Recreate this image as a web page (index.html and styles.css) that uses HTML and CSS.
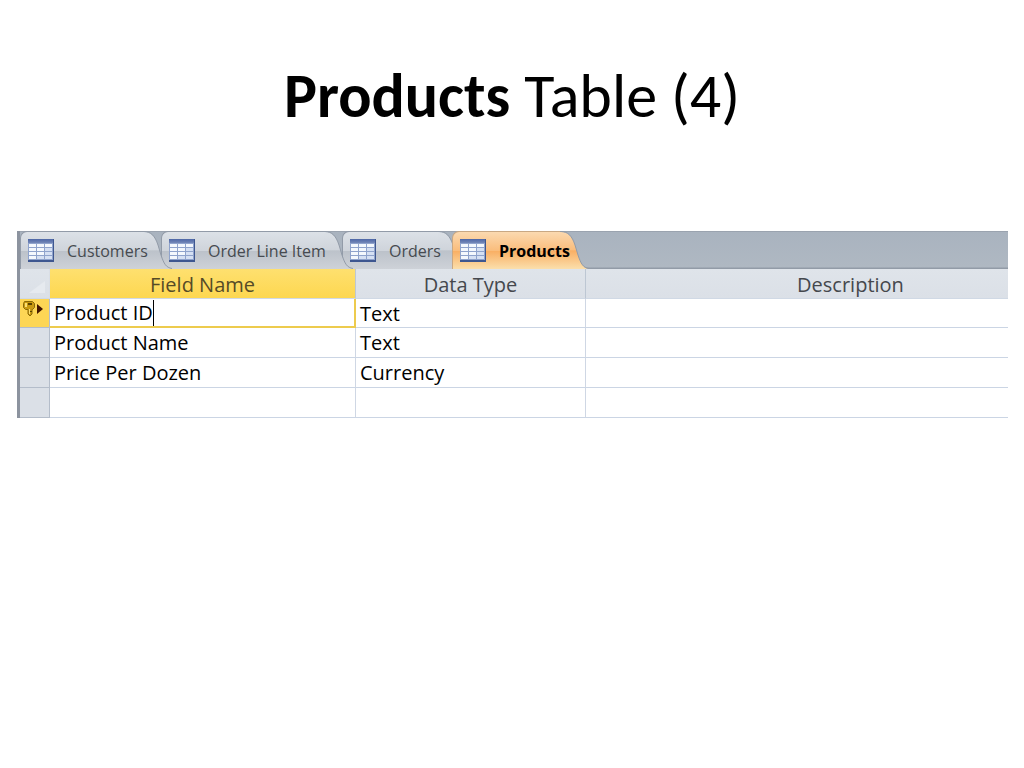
FILE: index.html
```html
<!DOCTYPE html>
<html lang="en">
<head>
<meta charset="utf-8">
<title>Products Table (4)</title>
<link rel="stylesheet" href="styles.css">
</head>
<body>
<svg class="defs" aria-hidden="true">
  <defs>
    <linearGradient id="grey" gradientUnits="userSpaceOnUse" x1="0" y1="0" x2="0" y2="38"><stop offset="0" stop-color="#dce1e7"/><stop offset=".5" stop-color="#cfd4db"/><stop offset=".52" stop-color="#bcc2ca"/><stop offset="1" stop-color="#ced2d8"/></linearGradient>
    <linearGradient id="orange" gradientUnits="userSpaceOnUse" x1="0" y1="0" x2="0" y2="38"><stop offset="0" stop-color="#fbd9b0"/><stop offset=".5" stop-color="#fabd7c"/><stop offset=".52" stop-color="#f9af64"/><stop offset="1" stop-color="#fbdfac"/></linearGradient>
    <linearGradient id="iconhead" x2="0" y2="1"><stop offset="0" stop-color="#4c66a6"/><stop offset="1" stop-color="#7488b8"/></linearGradient>
    <symbol id="grid" viewBox="0 0 26 23">
      <rect width="26" height="23" fill="#8fa3cc"/>
      <rect width="26" height="4" fill="url(#iconhead)"/>
      <path fill="#f4f8fd" d="M1 5h7v3H1zM9 5h7v3H9zM17 5h7v3h-7zM1 9h7v3H1zM9 9h7v3H9zM1 13h7v3H1zM9 13h7v3H9zM1 17h7v3H1z"/>
      <path fill="#d5e0f3" d="M17 9h7v3h-7zM17 13h7v3h-7zM9 17h7v3H9zM17 17h7v3h-7z"/>
      <path fill="#3e5790" d="M0 21h26v2H0zM25 0h1v23h-1z"/>
    </symbol>
    <symbol id="slope" viewBox="0 0 30 38">
      <path d="M0 1H1C8 1 12 5 15 14L18 24C21 33 23 37 29 38H0Z"/>
      <path fill="none" stroke="#929ba8" d="M0 .5H1C8 .5 12 5 15 14L18 24C21 33 23 36.500 29 37.500"/>
    </symbol>
  </defs>
</svg>
<header><h1><strong>Products</strong> Table (4)</h1></header>
<main class="window">
  <nav class="tabs" role="tablist">
    <button class="tab customers" role="tab"><svg class="icon"><use href="#grid"/></svg><span>Customers</span><svg class="edge"><use href="#slope"/></svg></button>
    <button class="tab items" role="tab"><svg class="icon"><use href="#grid"/></svg><span>Order Line Item</span><svg class="edge"><use href="#slope"/></svg></button>
    <button class="tab orders" role="tab"><svg class="icon"><use href="#grid"/></svg><span>Orders</span><svg class="edge"><use href="#slope"/></svg></button>
    <button class="tab active" role="tab" aria-selected="true"><svg class="icon"><use href="#grid"/></svg><span>Products</span><svg class="edge"><use href="#slope"/></svg></button>
  </nav>
  <div class="design">
    <table>
      <colgroup><col class="c-select"><col class="c-name"><col class="c-type"><col class="c-desc"></colgroup>
      <thead>
        <tr><th class="corner"><svg width="16" height="12" viewBox="0 0 16 12"><path d="M16 0V12H0Z" fill="#e6eaef"/></svg></th><th class="current">Field Name</th><th>Data Type</th><th>Description</th></tr>
      </thead>
      <tbody>
        <tr>
          <td class="select key"><svg width="24" height="20" viewBox="0 0 24 20"><path fill="#c99a12" stroke="#8a6a08" d="M3.500 1.500h8l2 2v4l-2 2H11V14l-2 2-2-2V9.500H4.500l-2-2v-4z"/><path fill="#fbe073" d="M4 3h2v4H4zM8 9h1v5H8z"/><path fill="#5a4300" d="M7 3h4v2H7zM9 11h2v1H9z"/><path fill="#421500" d="M16 4l6 5-6 5z"/></svg></td>
          <td class="editing"><input type="text" value="Product ID" aria-label="Field name"></td><td>Text</td><td></td>
        </tr>
        <tr><td class="select"></td><td>Product Name</td><td>Text</td><td></td></tr>
        <tr><td class="select"></td><td>Price Per Dozen</td><td>Currency</td><td></td></tr>
        <tr><td class="select"></td><td></td><td></td><td></td></tr>
      </tbody>
    </table>
  </div>
</main>
</body>
</html>
```
FILE: styles.css
```css
* { box-sizing: border-box; }
body { margin: 0; background: #fff; color: #000; font-family: "Open Sans", "Noto Sans", sans-serif; }
.defs { position: absolute; width: 0; height: 0; }
header { padding: 60px 16px 0; height: 231px; }
h1 { margin: 0; font: 400 62px/72px Carlito, "Noto Sans", sans-serif; text-align: center; }
h1 strong { font-weight: 700; }

.window { margin: 0 16px 0 17px; border-left: 3px solid #8c939f; overflow: hidden; }
.tabs { display: flex; height: 38px; background: linear-gradient(#9aa3af 0 1px, #a9b3bf 1px, #afb8c2 36px, #929ba7 37px); }
.tab { position: relative; display: flex; align-items: center; flex: none; height: 38px; margin: 0; padding: 0 0 0 7px; gap: 13px; border: 0; border-left: 1px solid #929ba8; border-top: 1px solid #929ba8; border-top-left-radius: 7px; background: linear-gradient(#dce1e7, #cfd4db 50%, #bcc2ca 52%, #ced2d8); color: #464a50; font: 16px/24px "Open Sans", "Noto Sans", sans-serif; white-space: nowrap; text-align: left; }
.customers { width: 123px; margin-right: 18px; z-index: 3; }
.items { width: 163px; margin-right: 18px; z-index: 2; }
.orders { width: 96px; margin-right: 14px; z-index: 1; }
.active { width: 108px; z-index: 4; border-color: #c9a883; background: linear-gradient(#fbd9b0, #fabd7c 50%, #f9af64 52%, #fbdfac); color: #000; font-weight: 700; }
.tab span { position: relative; z-index: 1; }
.icon { width: 26px; height: 23px; flex: none; }
.edge { position: absolute; right: -30px; top: -1px; width: 30px; height: 38px; fill: url(#grey); }
.active .edge { fill: url(#orange); }

.design { overflow: hidden; }
table { width: 1096px; table-layout: fixed; border-collapse: separate; border-spacing: 0; font-size: 20px; line-height: 26px; }
.c-select { width: 30px; }
.c-name { width: 306px; }
.c-type { width: 230px; }
th { height: 30px; padding: 2px 0 0; border-right: 1px solid #bdc7d3; border-bottom: 1px solid #d0d9e5; background: linear-gradient(#dfe4ea, #dbe0e7); color: #45484d; font-weight: 400; }
th.corner { text-align: right; vertical-align: bottom; line-height: 0; padding: 0 4px 5px 0; border-right-color: #d9dee6; }
th.current { background: linear-gradient(#fee06f, #fdd750); color: #554b27; }
td { height: 30px; padding: 1px 4px 0; border-right: 1px solid #cfd7e4; border-bottom: 1px solid #cbd5e4; }
tr:first-child td { height: 29px; }
td.select { padding: 0; background: #dbe0e7; border-color: #b4bdca; }
td.key { background: #fdd655; line-height: 0; vertical-align: top; padding: 1px 0 0 1px; }
td.editing { padding: 1px 2px 0 4px; border: solid #edcb4e; border-width: 0 2px 2px 0; }
input { display: block; field-sizing: content; height: 26px; margin: 0; padding: 0; border: 0; border-right: 1px solid #000; background: none; color: #000; font: inherit; outline: 0; }
```
